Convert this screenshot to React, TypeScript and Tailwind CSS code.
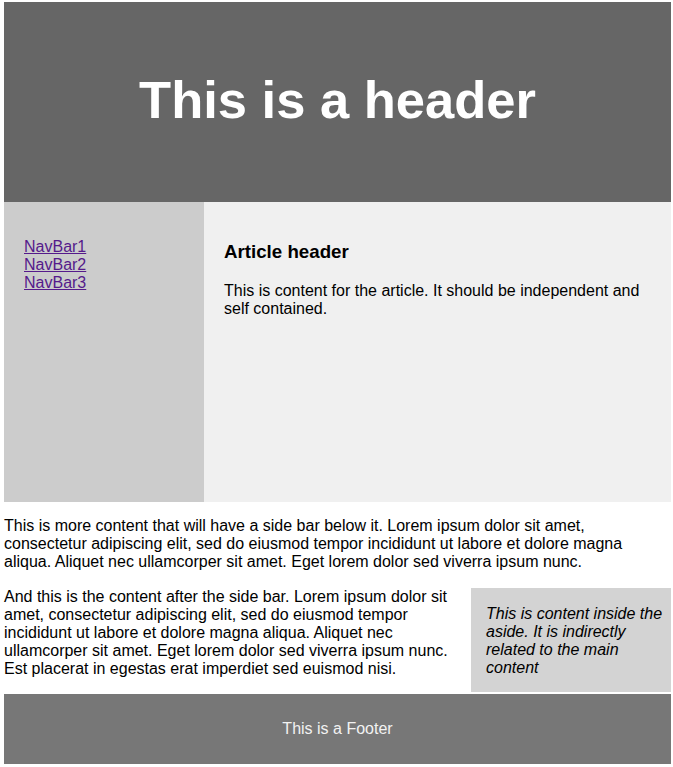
export default function App() {
  return (
    <div className="pt-[2px] pl-[4px] pr-[2px] pb-[3px] bg-white text-black text-[16px] leading-[18px]" style={{ fontFamily: '"Liberation Sans", Arial, sans-serif' }}>
      <header className="h-[200px] bg-[#666666] flex items-center justify-center pb-[4px]">
        <h1 className="text-white font-bold text-[52.5px] leading-[60px]">This is a header</h1>
      </header>
      <div className="flex h-[300px]">
        <nav className="w-[200px] bg-[#cccccc] px-[20px] pt-[36px]">
          <ul className="flex flex-col">
            <li><a href="#" className="text-[#551a8b] underline">NavBar1</a></li>
            <li><a href="#" className="text-[#551a8b] underline">NavBar2</a></li>
            <li><a href="#" className="text-[#551a8b] underline">NavBar3</a></li>
          </ul>
        </nav>
        <article className="flex-1 bg-[#f0f0f0] px-[20px] pt-[39px]">
          <h3 className="font-bold text-[18.72px] leading-[22px]">Article header</h3>
          <p className="mt-[19px]">This is content for the article. It should be independent and self contained.</p>
        </article>
      </div>
      <p className="mt-[15px]">This is more content that will have a side bar below it. Lorem ipsum dolor sit amet, consectetur adipiscing elit, sed do eiusmod tempor incididunt ut labore et dolore magna aliqua. Aliquet nec ullamcorper sit amet. Eget lorem dolor sed viverra ipsum nunc.</p>
      <div className="mt-[17px] flow-root">
        <aside className="float-right w-[200px] h-[104px] bg-[#d3d3d3] pl-[15px] pr-[7px] pt-[17px] italic">
          This is content inside the aside. It is indirectly related to the main content
        </aside>
        <p className="pr-[10px]">And this is the content after the side bar. Lorem ipsum dolor sit amet, consectetur adipiscing elit, sed do eiusmod tempor incididunt ut labore et dolore magna aliqua. Aliquet nec ullamcorper sit amet. Eget lorem dolor sed viverra ipsum nunc. Est placerat in egestas erat imperdiet sed euismod nisi.</p>
      </div>
      <footer className="mt-[2px] h-[70px] bg-[#777777] flex items-center justify-center text-[#f2f2f2]">
        This is a Footer
      </footer>
    </div>
  );
}
